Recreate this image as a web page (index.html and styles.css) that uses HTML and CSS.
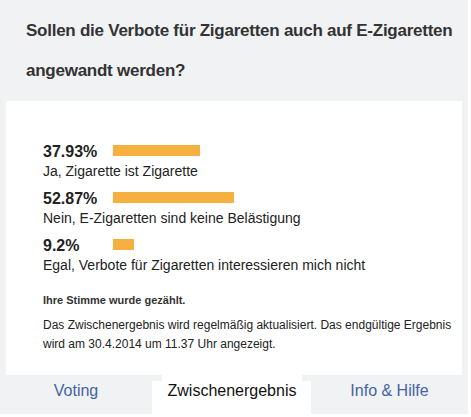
FILE: index.html
```html
<!DOCTYPE html>
<html lang="de">
<head>
  <meta charset="UTF-8">
  <title>Umfrage E-Zigaretten</title>
  <link rel="stylesheet" href="styles.css">
</head>
<body>
  <div class="poll">
    <h1 class="question">Sollen die Verbote für Zigaretten auch auf E-Zigaretten<br>angewandt werden?</h1>

    <div class="panel">
      <div class="result">
        <div class="result-head">
          <span class="percent">37.93%</span>
          <span class="bar" style="width: 87px"></span>
        </div>
        <div class="answer">Ja, Zigarette ist Zigarette</div>
      </div>
      <div class="result">
        <div class="result-head">
          <span class="percent">52.87%</span>
          <span class="bar" style="width: 121px"></span>
        </div>
        <div class="answer">Nein, E-Zigaretten sind keine Belästigung</div>
      </div>
      <div class="result">
        <div class="result-head">
          <span class="percent">9.2%</span>
          <span class="bar" style="width: 21px"></span>
        </div>
        <div class="answer">Egal, Verbote für Zigaretten interessieren mich nicht</div>
      </div>

      <p class="voted">Ihre Stimme wurde gezählt.</p>
      <p class="note">Das Zwischenergebnis wird regelmäßig aktualisiert. Das endgültige Ergebnis wird am 30.4.2014 um 11.37 Uhr angezeigt.</p>
    </div>

    <div class="tabs">
      <a class="tab tab-voting">Voting</a>
      <a class="tab tab-result active">Zwischenergebnis</a>
      <a class="tab tab-info">Info &amp; Hilfe</a>
    </div>
  </div>
</body>
</html>
```

FILE: styles.css
```css
html {
  background-color: white;
}
body {
  margin: 0;
  font-family: "Liberation Sans", Arial, sans-serif;
  color: #333;
}
.poll {
  width: 468px;
  background-color: #f1f2f4;
}
.question {
  margin: 0;
  padding: 11px 0 10px 26px;
  font-size: 17px;
  line-height: 40px;
  font-weight: bold;
  letter-spacing: -0.25px;
  white-space: nowrap;
  color: #333;
}
.panel {
  margin: 0 6px;
  padding: 41px 10px 21px 37px;
  background-color: white;
}
.result {
  margin-bottom: 9px;
}
.result-head {
  display: flex;
  align-items: flex-start;
  height: 20px;
}
.percent {
  width: 70px;
  font-size: 16px;
  line-height: 20px;
  font-weight: bold;
  color: #222;
}
.bar {
  height: 11px;
  margin-top: 3px;
  background-color: #f6b03f;
}
.answer {
  font-size: 14px;
  line-height: 18px;
  color: #222;
}
.voted {
  margin: 18px 0 8px;
  font-size: 11px;
  line-height: 16px;
  font-weight: bold;
}
.note {
  margin: 0;
  font-size: 12px;
  line-height: 19px;
  color: #222;
}
.tabs {
  display: flex;
  gap: 10px;
  height: 42px;
  background-color: white;
  box-shadow: inset 0 6px 0 #f1f2f4;
}
.tab {
  height: 39px;
  font-size: 16px;
  line-height: 32px;
  text-align: center;
  color: #4563a4;
  background-color: #f1f2f4;
  cursor: pointer;
}
.tab-voting {
  width: 152px;
}
.tab-result {
  width: 140px;
}
.tab-info {
  width: 157px;
  margin-left: -1px;
}
.tab.active {
  background-color: white;
  color: #111;
}
```
